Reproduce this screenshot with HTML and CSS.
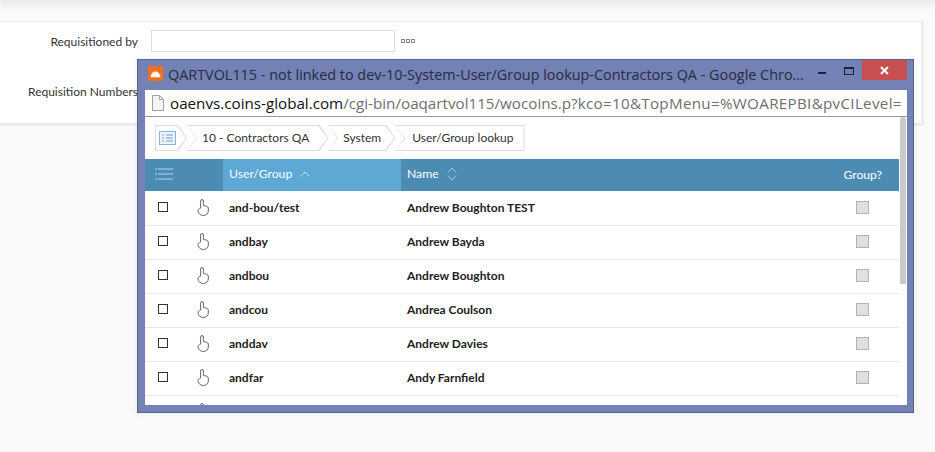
FILE: index.html
```html
<!DOCTYPE html>
<html lang="en">

<head>
    <meta charset="UTF-8">
    <title>Requisition</title>
    <link rel="stylesheet" href="styles.css">
</head>

<body>
    <div class="topbar"></div>
    <section class="panel">
        <div class="field field-first">
            <label class="field-label">Requisitioned by</label>
            <input class="field-input" type="text">
            <span class="dots"><i></i><i></i><i></i></span>
        </div>
        <div class="field">
            <label class="field-label">Requisition Numbers</label>
        </div>
    </section>

    <svg class="defs" width="0" height="0">
        <symbol id="hand" viewBox="0 0 12 17">
            <path d="M3.600 9.200V2a1.400 1.400 0 0 1 2.800 0v4.600c1.600.1 4.900.5 4.900 2.400v3c0 2.500-2.200 4.500-5 4.500-2.700 0-5.300-2-5.300-4.700 0-1.400 1.100-2.500 2.600-2.700" fill="none" stroke="#666" stroke-width="1"/>
        </symbol>
    </svg>

    <div class="popup">
        <div class="popup-title">
            <svg class="app-icon" width="15" height="15" viewBox="0 0 15 15">
                <rect width="15" height="15" fill="#f4701f"/>
                <path d="M2.500 11.200C3 7.500 5 5.600 7.500 5.600s4.500 1.900 5 5.600z" fill="#fff"/>
            </svg>
            <span class="popup-name">QARTVOL115 - not linked to dev-10-System-User/Group lookup-Contractors QA - Google Chro...</span>
            <span class="btn-min"></span>
            <span class="btn-max"></span>
            <span class="btn-close">
                <svg width="9" height="9" viewBox="0 0 9 9">
                    <path d="M1 1l7 7M8 1L1 8" stroke="#fff" stroke-width="2"/>
                </svg>
            </span>
        </div>
        <div class="address">
            <svg class="page-icon" width="12" height="16" viewBox="0 0 12 16">
                <path d="M.5.500h7l4 4v11H.5z" fill="#f4f4f4" stroke="#a0a0a0"/>
                <path d="M7.500.500v4h4" fill="none" stroke="#a0a0a0"/>
            </svg>
            <span class="url"><b>oaenvs.coins-global.com</b>/cgi-bin/oaqartvol115/wocoins.p?<span class="query">kco=10&amp;TopMenu=%WOAREPBI&amp;pvCILevel=</span></span>
        </div>
        <div class="popup-body">
            <div class="content">
                <nav class="crumbs">
                    <a class="crumb crumb-home"><span>
                        <svg width="17" height="14" viewBox="0 0 17 14">
                            <rect x=".5" y=".5" width="16" height="13" fill="#eef4fb" stroke="#8db1dc"/>
                            <path d="M3 4h2M7 4h7M3 7h2M7 7h7M3 10h2M7 10h7" stroke="#6d9ad2"/>
                        </svg>
                    </span></a>
                    <a class="crumb crumb-qa"><span>10 - Contractors QA</span></a>
                    <a class="crumb crumb-system"><span>System</span></a>
                    <a class="crumb crumb-last"><span>User/Group lookup</span></a>
                </nav>
                <div class="lookup">
                    <div class="row head">
                        <div class="cell-check">
                            <svg width="18" height="12" viewBox="0 0 18 12">
                                <path d="M0 1h2M3 1h15M0 6h2M3 6h15M0 11h2M3 11h15" stroke="#b4d5e8" stroke-width="1"/>
                            </svg>
                        </div>
                        <div class="cell-hand"></div>
                        <div class="cell-user active">User/Group
                            <svg class="sort" width="10" height="6" viewBox="0 0 10 6">
                                <path d="M.5 5.500L5 1l4.500 4.500" fill="none" stroke="#cfe6f5"/>
                            </svg>
                        </div>
                        <div class="cell-name">Name
                            <svg class="sort" width="10" height="14" viewBox="0 0 10 14">
                                <path d="M1 5.500L5 1l4 4.500M1 8.500l4 4.500 4-4.500" fill="none" stroke="#a9cfe4"/>
                            </svg>
                        </div>
                        <div class="cell-group">Group?</div>
                    </div>
                    <div class="row">
                        <div class="cell-check"><i class="tick"></i></div>
                        <div class="cell-hand"><svg width="12" height="17"><use href="#hand"/></svg></div>
                        <div class="cell-user">and-bou/test</div>
                        <div class="cell-name">Andrew Boughton TEST</div>
                        <div class="cell-group"><i class="box"></i></div>
                    </div>
                    <div class="row">
                        <div class="cell-check"><i class="tick"></i></div>
                        <div class="cell-hand"><svg width="12" height="17"><use href="#hand"/></svg></div>
                        <div class="cell-user">andbay</div>
                        <div class="cell-name">Andrew Bayda</div>
                        <div class="cell-group"><i class="box"></i></div>
                    </div>
                    <div class="row">
                        <div class="cell-check"><i class="tick"></i></div>
                        <div class="cell-hand"><svg width="12" height="17"><use href="#hand"/></svg></div>
                        <div class="cell-user">andbou</div>
                        <div class="cell-name">Andrew Boughton</div>
                        <div class="cell-group"><i class="box"></i></div>
                    </div>
                    <div class="row">
                        <div class="cell-check"><i class="tick"></i></div>
                        <div class="cell-hand"><svg width="12" height="17"><use href="#hand"/></svg></div>
                        <div class="cell-user">andcou</div>
                        <div class="cell-name">Andrea Coulson</div>
                        <div class="cell-group"><i class="box"></i></div>
                    </div>
                    <div class="row">
                        <div class="cell-check"><i class="tick"></i></div>
                        <div class="cell-hand"><svg width="12" height="17"><use href="#hand"/></svg></div>
                        <div class="cell-user">anddav</div>
                        <div class="cell-name">Andrew Davies</div>
                        <div class="cell-group"><i class="box"></i></div>
                    </div>
                    <div class="row">
                        <div class="cell-check"><i class="tick"></i></div>
                        <div class="cell-hand"><svg width="12" height="17"><use href="#hand"/></svg></div>
                        <div class="cell-user">andfar</div>
                        <div class="cell-name">Andy Farnfield</div>
                        <div class="cell-group"><i class="box"></i></div>
                    </div>
                    <div class="row">
                        <div class="cell-check"><i class="tick"></i></div>
                        <div class="cell-hand"><svg width="12" height="17"><use href="#hand"/></svg></div>
                        <div class="cell-user"></div>
                        <div class="cell-name"></div>
                        <div class="cell-group"><i class="box"></i></div>
                    </div>
                </div>
            </div>
            <div class="scroll"><div class="scroll-thumb"></div></div>
        </div>
    </div>
</body>

</html>
```

FILE: styles.css
```css
* {
    margin: 0;
    padding: 0;
    box-sizing: border-box;
}

html,
body {
    height: 100%;
    overflow: hidden;
}

body {
    background: #fafafa;
    font-family: Lato, "Liberation Sans", sans-serif;
    font-size: 12px;
    color: #222;
}

.defs {
    display: block;
    height: 0;
}

.topbar {
    height: 2px;
    background: #ececec;
    box-shadow: 0 2px 6px rgba(0, 0, 0, 0.2);
}

.panel {
    width: 924px;
    height: 105px;
    margin-top: 19px;
    background: #fff;
    border-top: 1px solid #ececec;
    border-right: 3px solid #ececec;
    border-bottom: 3px solid #ececec;
}

.field {
    display: flex;
    align-items: center;
    height: 22px;
}

.field-first {
    margin-top: 8px;
    margin-bottom: 28px;
}

.field-label {
    width: 138px;
    flex: none;
    text-align: right;
    white-space: nowrap;
    font-size: 12px;
    color: #333;
}

.field-input {
    width: 244px;
    height: 22px;
    margin-left: 13px;
    border: 1px solid #ddd;
    background: #fff;
}

.dots {
    display: flex;
    gap: 1px;
    margin-left: 6px;
}

.dots i {
    display: block;
    width: 4px;
    height: 4px;
    border: 1px solid #888;
}

/* popup window */
.popup {
    position: absolute;
    left: 137px;
    top: 59px;
    width: 777px;
    height: 354px;
    display: flex;
    flex-direction: column;
    background: #7481b4;
    border: 1px solid #56628c;
    box-shadow: 0 0 6px rgba(0, 0, 0, 0.08);
}

.popup-title {
    display: flex;
    align-items: flex-start;
    height: 30px;
    padding-left: 10px;
    flex: none;
}

.app-icon {
    flex: none;
    margin-top: 6px;
}

.popup-name {
    width: 645px;
    margin-left: 5px;
    margin-top: 5px;
    font-family: "Open Sans", sans-serif;
    font-size: 14.400px;
    line-height: 20px;
    color: #272c40;
    white-space: nowrap;
    overflow: hidden;
}

.btn-min {
    width: 8px;
    height: 2px;
    margin-left: 5px;
    margin-top: 12px;
    background: #1d2233;
}

.btn-max {
    width: 10px;
    height: 8px;
    margin-left: 18px;
    margin-top: 7px;
    border: 1px solid #1d2233;
    border-top-width: 2px;
}

.btn-close {
    display: flex;
    align-items: center;
    justify-content: center;
    width: 45px;
    height: 20px;
    margin-left: 8px;
    background: #c75050;
}

.address {
    display: flex;
    align-items: center;
    flex: none;
    height: 27px;
    margin: 0 6px 0 7px;
    padding-left: 7px;
    background: #fff;
    border-bottom: 1px solid #999;
    overflow: hidden;
}

.page-icon {
    flex: none;
}

.url {
    margin-left: 6px;
    font-family: "Open Sans", sans-serif;
    font-size: 15.200px;
    white-space: nowrap;
    color: #6f6f6f;
}

.url b {
    font-weight: 400;
    color: #111;
}

.query {
    letter-spacing: 0.3px;
}

.popup-body {
    display: flex;
    flex: 1;
    min-height: 0;
    margin: 0 6px 7px 7px;
    background: #fff;
    overflow: hidden;
}

.content {
    width: 754px;
    flex: none;
}

.scroll {
    width: 6px;
    margin-left: 1px;
    flex: none;
}

.scroll-thumb {
    height: 167px;
    background: #c9c9c9;
    border-radius: 3px 3px 0 0;
}

/* breadcrumb */
.crumbs {
    display: flex;
    height: 26px;
    margin: 8px 0 8px 10px;
}

.crumb {
    display: block;
    height: 26px;
    background: #dcdcdc;
    clip-path: polygon(0 0, calc(100% - 9px) 0, 100% 50%, calc(100% - 9px) 100%, 0 100%, 9px 50%);
}

.crumb span {
    display: flex;
    align-items: center;
    height: 24px;
    margin: 1px;
    background: #fff;
    clip-path: polygon(0 0, calc(100% - 9px) 0, 100% 50%, calc(100% - 9px) 100%, 0 100%, 9px 50%);
    font-size: 12px;
    color: #333;
    white-space: nowrap;
}

.crumb-home {
    width: 32px;
    clip-path: polygon(0 0, calc(100% - 9px) 0, 100% 50%, calc(100% - 9px) 100%, 0 100%);
}

.crumb-home span {
    padding-left: 3px;
    clip-path: polygon(0 0, calc(100% - 9px) 0, 100% 50%, calc(100% - 9px) 100%, 0 100%);
}

.crumb-qa span {
    padding: 0 18px 2px 14px;
}

.crumb-system span {
    padding: 0 13px 2px 14px;
}

.crumb-last,
.crumb-last span {
    clip-path: polygon(0 0, 100% 0, 100% 100%, 0 100%, 9px 50%);
}

.crumb-last span {
    padding: 0 10px 2px 16px;
}

/* lookup table */
.row {
    display: flex;
    align-items: center;
    height: 34px;
    padding-bottom: 3px;
    border-bottom: 1px solid #e8e8e8;
    font-size: 12px;
    font-weight: 700;
    color: #222;
}

.row.head {
    align-items: stretch;
    height: 32px;
    margin-bottom: 1px;
    padding-bottom: 0;
    background: #4d8cb2;
    border-bottom: 0;
    font-size: 12.200px;
    font-weight: 400;
    color: #fff;
}

.head > div {
    display: flex;
    align-items: center;
    padding-bottom: 3px;
}

.cell-check {
    width: 40px;
    padding-left: 13px;
    flex: none;
}

.head .cell-check {
    padding-left: 10px;
}

.cell-hand {
    width: 38px;
    padding-left: 12px;
    flex: none;
}

.cell-hand svg,
.cell-check svg {
    display: block;
}

.cell-user {
    width: 178px;
    padding-left: 6px;
    flex: none;
}

.head .active {
    background: #5ea8d6;
}

.cell-name {
    flex: 1;
    padding-left: 6px;
}

.sort {
    margin-left: 8px;
}

.cell-group {
    width: 80px;
    padding-right: 17px;
    flex: none;
    text-align: right;
}

.head .cell-group {
    justify-content: flex-end;
    padding-bottom: 1px;
}

.tick {
    display: block;
    width: 10px;
    height: 10px;
    border: 1px solid #333;
}

.box {
    display: block;
    width: 13px;
    height: 13px;
    margin: 0 13px 0 auto;
    background: #e0e0e0;
    border: 1px solid #b2b2b2;
}
```
